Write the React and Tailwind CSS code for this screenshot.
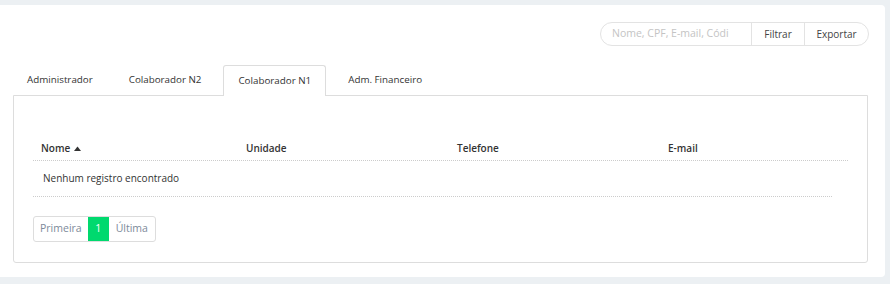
const tabs = ["Administrador", "Colaborador N2", "Colaborador N1", "Adm. Financeiro"];
const active = "Colaborador N1";

const App = () => {
  return (
    <div className="w-[890px] h-[284px] bg-[#ecf0f3] pt-[5px] font-['Open_Sans',sans-serif] text-[#333]">
      <div className="w-[885px] h-[272px] bg-white rounded-r-[4px] flex flex-col">
        {/* Toolbar */}
        <div className="flex justify-end pt-[17px] pr-[16px]">
          <div className="flex h-[24px] border border-[#e3e3e3] rounded-full text-[10.5px]">
            <input
              placeholder="Nome, CPF, E-mail, Códi"
              className="w-[150px] pl-[11px] outline-none bg-transparent placeholder:text-[#c4c4c4] rounded-l-full"
            />
            <button className="w-[53px] border-l border-[#e3e3e3] text-[#444] text-[10px]">Filtrar</button>
            <button className="w-[64px] border-l border-[#e3e3e3] text-[#444] text-[10px] rounded-r-full">Exportar</button>
          </div>
        </div>

        {/* Tabs */}
        <div className="flex gap-[8px] ml-[13px] mt-[19px] h-[30px] text-[9.8px]">
          {tabs.map((t) =>
            t === active ? (
              <div
                key={t}
                className="px-[14px] pt-[1px] flex items-center bg-white border border-[#ddd] border-b-0 rounded-t-[3px] relative -mb-px z-10"
              >
                {t}
              </div>
            ) : (
              <div key={t} className="px-[14px] pt-[1px] flex items-center">
                {t}
              </div>
            )
          )}
        </div>

        {/* Panel */}
        <div className="ml-[13px] w-[855px] border border-[#ddd] rounded-b-[3px] pt-[40px] pl-[19px] pr-[19px] pb-[20px] text-[10px]">
          <div className="grid grid-cols-[205px_211px_211px_1fr] h-[25px] items-center font-semibold border-b border-dotted border-[#ccc]">
            <div className="pl-[8px] flex items-center gap-[4px]">
              Nome
              <svg width="7" height="5" viewBox="0 0 7 5">
                <path d="M0 5 L3.5 0.5 L7 5 Z" fill="#333" />
              </svg>
            </div>
            <div className="pl-[8px]">Unidade</div>
            <div className="pl-[8px]">Telefone</div>
            <div className="pl-[8px]">E-mail</div>
          </div>
          <div className="w-[799px] h-[36px] flex items-center pl-[10px] border-b border-dotted border-[#ccc]">
            Nenhum registro encontrado
          </div>

          <div className="mt-[19px] inline-flex h-[26px] border border-[#ddd] rounded-[3px] text-[10.5px]">
            <div className="px-[6px] flex items-center text-[#7d8a9a]">Primeira</div>
            <div className="w-[21px] flex items-center justify-center bg-[#00d96e] text-white">1</div>
            <div className="px-[7px] flex items-center text-[#7d8a9a]">Última</div>
          </div>
        </div>
      </div>
    </div>
  );
};

export default App;
